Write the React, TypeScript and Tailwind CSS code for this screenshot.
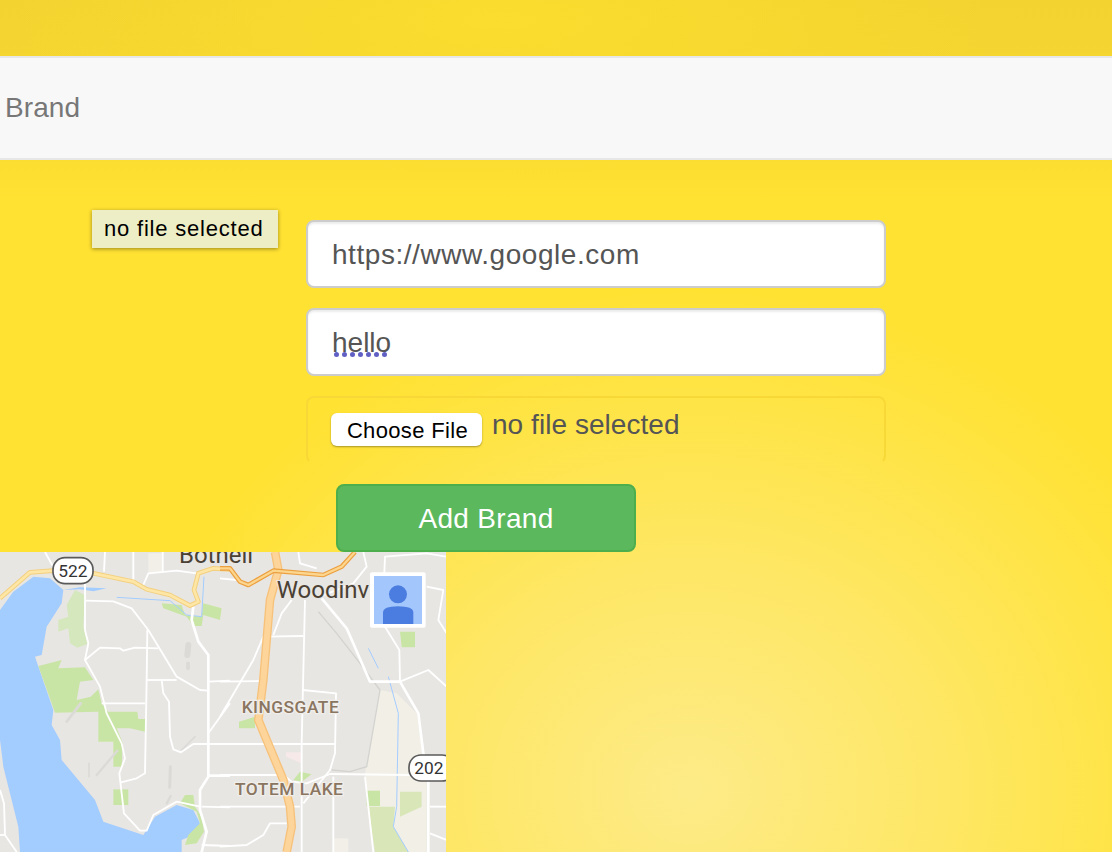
const whiteLeft = [
  'M255 130 L255 270 L265 310 L255 360 L300 440 L320 520 L365 610 L375 655 L358 700 L372 820 L420 872 L440 872 L460 825 L530 785 L600 800',
  'M255 360 L300 323 L360 325 L370 332 L405 323 L475 325',
  'M255 182 L340 184 L395 205 L445 270 L530 410 L600 450 L625 452',
  'M442 270 L440 420 L435 700 L410 715 L360 728',
  'M440 420 L530 420',
  'M305 490 L435 490',
  'M485 420 L490 460 L507 485 L510 590 L520 628 L543 637 L580 612 L690 612',
  'M135 36 L165 90',
  'M315 36 L312 95',
  'M400 36 L400 120',
  'M488 36 L488 95',
  'M430 135 L445 100 L530 92 L590 100',
  'M0 750 L12 790 L15 885 L50 936',
  'M0 885 L15 885',
  'M625 425 L690 422',
  'M625 580 L690 490',
  'M605 800 L690 802',
  'M605 915 L690 918',
]

const whiteLeftWide = [
  'M580 200 L575 240 L595 305 L625 345 L625 710 L600 750 L600 810 L620 875 L605 936',
  'M625 707 L690 707',
]

const whiteRight = [
  'M0 115 L50 120',
  'M0 530 L100 360 L130 290 L250 288',
  'M255 180 L245 610 L245 800 L245 936',
  'M160 285 L185 220 L215 180',
  'M0 425 L130 423',
  'M248 450 L348 460 L345 640 L330 690 L250 790',
  'M0 612 L345 612',
  'M0 705 L190 705 L215 725 L260 730 L330 702 L570 705',
  'M0 800 L240 800',
  'M340 710 L340 936',
  'M435 710 L460 936',
  'M540 425 L538 330 L495 260 L490 170 L495 50 L620 40 L680 50',
  'M620 140 L670 150 L655 240 L680 280',
  'M540 425 L625 390 L680 440',
  'M0 920 L80 915 L130 885 L150 850 L200 850',
  'M630 800 L680 800',
  'M630 880 L680 900',
  'M235 36 L240 70 L290 85',
  'M430 36 L440 80 L400 130 L300 170',
]

const whiteRightWide = ['M305 175 L380 265 L450 425 L540 425 L595 520 L610 640 L625 720 L625 936']

function MapPanel() {
  return (
    <svg width="446" height="300" viewBox="0 0 446 300" className="block font-['Roboto',sans-serif]">
      <rect width="446" height="300" fill="#e8e6e3" />

      <g transform="translate(0 -12) scale(0.33333)">
        <path d="M445 40 L485 40 L485 95 L445 100 Z" fill="#f1efe8" />
        <path
          d="M0 210 L40 155 L100 110 L150 115 L190 150 L185 190 L140 260 L125 345 L105 350 L160 510 L155 555 L180 600 L185 660 L285 780 L310 845 L430 885 L465 830 L530 795 L580 810 L600 850 L580 885 L545 900 L545 936 L60 936 L55 860 L10 680 L0 600 Z"
          fill="#a3ccff"
        />
        <path d="M190 150 L240 142 L320 145 L280 154 L240 148 Z" fill="#a3ccff" />
        <g fill="#c9e5a6">
          <path d="M225 150 L200 195 L205 230 L175 240 L175 275 L205 265 L210 310 L232 323 L262 312 L250 260 L255 165 Z" fill="#d5e7bd" />
          <path d="M115 378 L185 360 L175 385 L255 382 L280 420 L240 425 L230 480 L272 470 L295 448 L305 490 L325 515 L412 515 L415 537 L435 537 L435 575 L390 565 L350 565 L368 608 L365 680 L340 680 L340 605 L295 605 L295 515 L165 518 Z" />
          <path d="M340 748 L385 748 L385 795 L340 795 Z" />
          <path d="M485 190 L545 195 L555 225 L605 230 L610 190 L665 205 L660 240 L610 225 L605 258 L580 258 L560 230 L490 205 Z" />
          <path d="M540 790 L555 765 L580 765 L585 800 L605 830 L612 875 L590 910 L555 915 L565 885 L600 850 L590 815 Z" />
        </g>
        <g stroke="#dbdad7" fill="none" strokeLinecap="round">
          <path d="M290 705 L352 632" strokeWidth="7" />
          <path d="M200 545 L242 490" strokeWidth="8" />
          <path d="M267 670 L267 710" strokeWidth="5" />
          <path d="M511 680 L509 742" strokeWidth="9" />
          <path d="M500 790 L512 768" strokeWidth="7" />
          <path d="M565 315 L562 345" strokeWidth="18" />
          <path d="M564 370 L564 385" strokeWidth="11" />
          <path d="M545 630 L585 590" strokeWidth="5" />
        </g>
        <path d="M350 172 L510 182 L560 225 L605 230 L612 110" fill="none" stroke="#a3ccff" strokeWidth="3" />
        <g fill="none" stroke="#ffffff" strokeWidth="5.5" strokeLinejoin="round">
          {whiteLeft.map((d) => (
            <path key={d} d={d} />
          ))}
          {whiteLeftWide.map((d) => (
            <path key={d} d={d} strokeWidth="8" />
          ))}
        </g>
        <path
          d="M0 175 L40 140 L90 97 L160 92 L280 100 L400 125 L440 148 L510 165 L570 197 L595 185 L582 150 L595 100 L640 85 L690 88"
          fill="none"
          stroke="#f3d07f"
          strokeWidth="14"
          strokeLinejoin="round"
        />
        <path
          d="M0 175 L40 140 L90 97 L160 92 L280 100 L400 125 L440 148 L510 165 L570 197 L595 185 L582 150 L595 100 L640 85 L690 88"
          fill="none"
          stroke="#fde6a6"
          strokeWidth="8"
          strokeLinejoin="round"
        />
      </g>

      <g transform="translate(220 -12) scale(0.33333)">
        <path d="M480 450 L530 460 L590 520 L620 710 L620 936 L465 936 L435 700 Z" fill="#f2efe7" />
        <path d="M340 895 L385 895 L385 936 L340 936 Z" fill="#f1efe8" />
        <g fill="#c9e5a6">
          <path d="M540 275 L585 275 L585 322 L545 322 Z" />
          <path d="M57 545 L105 530 L105 565 L57 565 Z" />
          <path d="M220 720 L240 695 L275 703 L245 725 Z" />
          <path d="M440 752 L480 752 L480 798 L440 798 Z" />
          <path d="M445 800 L525 800 L520 860 L565 936 L465 936 Z" fill="#d8e6b8" />
          <path d="M540 755 L605 755 L605 800 L540 830 Z" fill="#d8e6b8" />
        </g>
        <path d="M198 637 L245 637 L245 670 L198 650 Z" fill="#f7e8ea" />
        <path
          d="M295 215 L350 280 L420 370 L480 450 L440 680 L390 695 L335 690"
          fill="none"
          stroke="#d3d3d0"
          strokeWidth="4"
        />
        <g fill="none" stroke="#a3ccff" strokeWidth="3">
          <path d="M445 325 L475 385" />
          <path d="M505 410 L535 520 L530 800 L520 860 L565 936" />
        </g>
        <g fill="none" stroke="#ffffff" strokeWidth="5.5" strokeLinejoin="round">
          {whiteRight.map((d) => (
            <path key={d} d={d} />
          ))}
          {whiteRightWide.map((d) => (
            <path key={d} d={d} strokeWidth="8" />
          ))}
        </g>
        <path
          d="M165 36 L175 90 L150 180 L130 420 L115 540 L190 720 L210 800 L215 860 L200 936"
          fill="none"
          stroke="#f6c27b"
          strokeWidth="26"
          strokeLinejoin="round"
        />
        <path
          d="M165 36 L175 90 L150 180 L130 420 L115 540 L190 720 L210 800 L215 860 L200 936"
          fill="none"
          stroke="#fdd59a"
          strokeWidth="18"
          strokeLinejoin="round"
        />
        <path
          d="M0 85 L30 85 L60 125 L85 135 L160 92 L310 105 L365 80 L405 36"
          fill="none"
          stroke="#ec9f3e"
          strokeWidth="14"
          strokeLinejoin="round"
        />
        <path
          d="M0 85 L30 85 L60 125 L85 135 L160 92 L310 105 L365 80 L405 36"
          fill="none"
          stroke="#fcd58e"
          strokeWidth="7"
          strokeLinejoin="round"
        />

        <rect x="450" y="97" width="167" height="166" rx="6" fill="#ffffff" />
        <rect x="462" y="108" width="144" height="144" fill="#a3c6fd" />
        <circle cx="534" cy="163" r="27" fill="#4a7ddf" />
        <path d="M489 252 L489 218 Q489 199 534 199 Q580 199 580 218 L580 252 Z" fill="#4a7ddf" />

        <text x="170" y="175" fontSize="72" fill="#4a4033" stroke="#e8e6e3" strokeWidth="6" paintOrder="stroke">
          Woodinv
        </text>
        <text x="65" y="520" fontSize="52" fontWeight="500" letterSpacing="1.5" fill="#8a7560" stroke="#f0eeeb" strokeWidth="8" paintOrder="stroke">
          KINGSGATE
        </text>
        <text x="45" y="766" fontSize="52" fontWeight="500" letterSpacing="1.5" fill="#8a7560" stroke="#f0eeeb" strokeWidth="8" paintOrder="stroke">
          TOTEM LAKE
        </text>
        <rect x="567" y="645" width="135" height="78" rx="36" fill="#ffffff" stroke="#5a5a5a" strokeWidth="5" />
        <text x="583" y="702" fontSize="52" fill="#333333">
          202
        </text>
      </g>

      <g transform="translate(0 -12) scale(0.33333)">
        <text x="537" y="68" fontSize="72" fill="#4a4033" stroke="#e8e6e3" strokeWidth="6" paintOrder="stroke">
          Bothell
        </text>
        <rect x="159" y="53" width="120" height="78" rx="36" fill="#ffffff" stroke="#5a5a5a" strokeWidth="5" />
        <text x="175" y="111" fontSize="52" fill="#333333">
          522
        </text>
      </g>
    </svg>
  )
}

export default function App() {
  return (
    <div className="relative h-[852px] overflow-hidden font-['Liberation_Sans',Arial,sans-serif] bg-[radial-gradient(ellipse_560px_500px_at_690px_790px,#fdeb88_0%,#fee765_45%,rgba(255,226,50,0)_100%),radial-gradient(ellipse_500px_160px_at_500px_20px,#fadd2e_0%,rgba(250,221,46,0)_100%),linear-gradient(to_bottom,#f3d330_0,#f6d630_100px,#ffe232_200px,#ffe232_100%)]">
      <div className="h-14" />

      <nav className="flex h-[104px] items-center border-y-2 border-[#e7e7e7] bg-[#f8f8f8] pl-[5px]">
        <span className="text-[28px] tracking-[0.1px] text-[#777777]">Brand</span>
      </nav>

      <main className="relative h-[392px] pt-[60px] pl-[306px]">
        <div className="absolute left-[92px] top-[50px] flex h-[38px] w-[186px] items-center bg-[#eeeec6] pb-[2px] pl-3 text-[22px] tracking-[0.8px] text-black shadow-[0_1px_4px_rgba(0,0,0,0.4)]">
          no file selected
        </div>

        <form className="flex w-[580px] flex-col gap-5">
          <input
            readOnly
            value="https://www.google.com"
            className="h-[68px] w-full rounded-lg border-2 border-[#cccccc] bg-white px-6 pt-[2px] text-[28px] tracking-[0.55px] text-[#555555] shadow-[inset_0_2px_2px_rgba(0,0,0,0.075)] outline-none"
          />

          <div className="relative">
            <input
              readOnly
              value="hello"
              className="h-[68px] w-full rounded-lg border-2 border-[#cccccc] bg-white px-6 pt-[2px] text-[28px] text-[#555555] shadow-[inset_0_2px_2px_rgba(0,0,0,0.075)] outline-none"
            />
            <div className="absolute left-7 top-[44px] flex gap-[3px]">
              {[0, 1, 2, 3, 4, 5, 6].map((i) => (
                <span key={i} className="size-[5px] rounded-full bg-[#5f5fc4]" />
              ))}
            </div>
          </div>

          <div className="flex h-[68px] items-start gap-2.5 rounded-lg border-2 border-[#f8d837] border-b-transparent pl-[23px] pt-[7px]">
            <button
              type="button"
              className="mt-2 flex h-[33px] w-[151px] items-center justify-center rounded-md bg-white pt-[2px] pl-[2px] text-[22px] tracking-[0.35px] text-black shadow-[0_1px_2px_rgba(0,0,0,0.35)]"
            >
              Choose File
            </button>
            <span className="text-[28px] leading-10 tracking-[0.05px] text-[#555555]">no file selected</span>
          </div>

          <button
            type="button"
            className="ml-[30px] h-[68px] w-[300px] rounded-lg border-2 border-[#4cae4c] bg-[#5cb85c] pt-[2px] text-[28px] tracking-[0.3px] text-white"
          >
            Add Brand
          </button>
        </form>
      </main>

      <MapPanel />
    </div>
  )
}
